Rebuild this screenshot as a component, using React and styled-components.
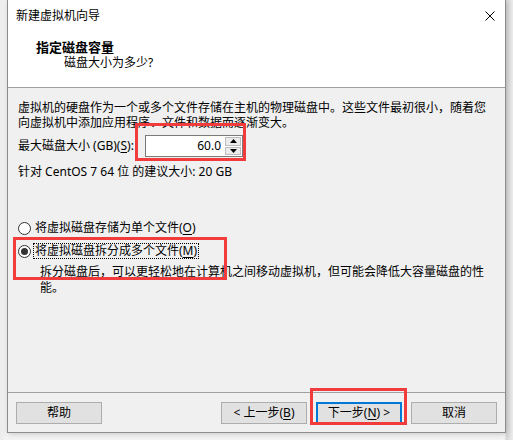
import React from "react"
import styled, { createGlobalStyle } from "styled-components"

const GlobalStyle = createGlobalStyle`
    html, body {
        margin: 0;
        padding: 0;
        background: #f2f2f2;
    }
    body {
        font-family: "Noto Sans", "Noto Sans CJK SC", sans-serif;
        font-size: 12px;
        color: #000;
    }
`

const Desktop = styled.div`
    position: relative;
    width: 513px;
    height: 440px;
    padding-left: 7px;
    box-sizing: border-box;
    overflow: hidden;
    background: linear-gradient(90deg, #ececec 0, #f4f4f4 7px, #f4f4f4 505px, #d6d6d6 506px, #ececec 513px);
`

const Window = styled.div`
    width: 499px;
    height: 433px;
    box-sizing: border-box;
    border: 1px solid #8c8c8c;
    border-top: none;
    background: #f0f0f0;
    display: flex;
    flex-direction: column;
    box-shadow: 1px 1px 6px rgba(0, 0, 0, 0.18);
`

const TitleBar = styled.div`
    height: 31px;
    background: #fff;
    display: flex;
    align-items: center;
    justify-content: space-between;
    padding: 0 10px 0 8px;
    line-height: 16px;
`

const CloseIcon = styled.svg`
    width: 10px;
    height: 10px;
`

const Header = styled.div`
    height: 57px;
    box-sizing: border-box;
    background: #fff;
    border-bottom: 1px solid #a0a0a0;
    padding: 8px 0 0 28px;
`

const HeaderTitle = styled.div`
    font-weight: bold;
    font-size: 13px;
    line-height: 16px;
`

const HeaderSub = styled.div`
    line-height: 16px;
    padding-left: 28px;
`

const Body = styled.div`
    flex: 1;
    padding: 12px 10px 0 10px;
`

const Paragraph = styled.p`
    margin: 0;
    width: 472px;
    line-height: 15px;
`

const SizeRow = styled.div`
    display: flex;
    align-items: center;
    height: 22px;
    margin-top: 5px;
`

const Label = styled.span`
    width: 127px;
    line-height: 16px;
`

const Key = styled.span`
    text-decoration: underline;
    text-underline-offset: 2px;
`

const SpinBox = styled.div`
    display: flex;
    height: 22px;
    box-sizing: border-box;
    border: 1px solid #7a7a7a;
    background: #fff;
`

const SpinValue = styled.div`
    width: 79px;
    text-align: right;
    padding-right: 4px;
    box-sizing: border-box;
    line-height: 20px;
`

const SpinButtons = styled.div`
    width: 16px;
    display: flex;
    flex-direction: column;
    gap: 1px;
    padding: 1px 1px 1px 0;
`

const SpinButton = styled.div`
    flex: 1;
    background: #ececec;
    border: 1px solid #bcbcbc;
    display: flex;
    align-items: center;
    justify-content: center;
`

const Hint = styled.div`
    margin-top: 7px;
    line-height: 16px;
`

const RadioGroup = styled.div`
    margin-top: 40px;
    display: flex;
    flex-direction: column;
    gap: 7px;
`

const RadioRow = styled.div`
    display: flex;
    align-items: center;
    height: 16px;
    gap: 2px;
`

const RadioCircle = styled.span`
    width: 13px;
    height: 13px;
    box-sizing: border-box;
    border: 1px solid #333;
    border-radius: 50%;
    background: #fff;
    display: flex;
    align-items: center;
    justify-content: center;
    &::after {
        content: "";
        width: 7px;
        height: 7px;
        border-radius: 50%;
        background: ${p => (p.$checked ? "#333" : "transparent")};
    }
`

const RadioLabel = styled.span`
    line-height: 14px;
    padding: 0 1px;
    border: 1px dotted ${p => (p.$focused ? "#000" : "transparent")};
`

const Description = styled.p`
    margin: 5px 0 0 22px;
    width: 450px;
    line-height: 16px;
`

const Footer = styled.div`
    height: 40px;
    box-sizing: border-box;
    border-top: 1px solid #a0a0a0;
    display: flex;
    align-items: flex-start;
    padding: 9px 7px 0 8px;
`

const Button = styled.div`
    width: 86px;
    height: 22px;
    box-sizing: border-box;
    background: #e1e1e1;
    border: 1px solid ${p => (p.$default ? "#0078d7" : "#adadad")};
    box-shadow: ${p => (p.$default ? "inset 0 0 0 1px #0078d7" : "none")};
    display: flex;
    align-items: center;
    justify-content: center;
    line-height: 16px;
    margin-left: ${p => p.$gap || 0}px;
`

const Mark = styled.div`
    position: absolute;
    box-sizing: border-box;
    border: 3px solid #f23b3d;
    pointer-events: none;
`

const Arrow = ({ up }) => (
    <svg width="7" height="4" viewBox="0 0 7 4">
        <path d={up ? "M0 4 L3.5 0 L7 4 Z" : "M0 0 L3.5 4 L7 0 Z"} fill="#000" />
    </svg>
)

export default function App() {
    return (
        <>
            <GlobalStyle />
            <Desktop>
                <Window>
                    <TitleBar>
                        <span>新建虚拟机向导</span>
                        <CloseIcon viewBox="0 0 10 10">
                            <path d="M0.5 0.5 L9.5 9.5 M9.5 0.5 L0.5 9.5" stroke="#000" strokeWidth="1" />
                        </CloseIcon>
                    </TitleBar>
                    <Header>
                        <HeaderTitle>指定磁盘容量</HeaderTitle>
                        <HeaderSub>磁盘大小为多少?</HeaderSub>
                    </Header>
                    <Body>
                        <Paragraph>
                            虚拟机的硬盘作为一个或多个文件存储在主机的物理磁盘中。这些文件最初很小，随着您向虚拟机中添加应用程序、文件和数据而逐渐变大。
                        </Paragraph>
                        <SizeRow>
                            <Label>最大磁盘大小 (GB)(<Key>S</Key>):</Label>
                            <SpinBox>
                                <SpinValue>60.0</SpinValue>
                                <SpinButtons>
                                    <SpinButton><Arrow up /></SpinButton>
                                    <SpinButton><Arrow /></SpinButton>
                                </SpinButtons>
                            </SpinBox>
                        </SizeRow>
                        <Hint>针对 CentOS 7 64 位 的建议大小: 20 GB</Hint>
                        <RadioGroup>
                            <RadioRow>
                                <RadioCircle />
                                <RadioLabel>将虚拟磁盘存储为单个文件(<Key>O</Key>)</RadioLabel>
                            </RadioRow>
                            <RadioRow>
                                <RadioCircle $checked />
                                <RadioLabel $focused>将虚拟磁盘拆分成多个文件(<Key>M</Key>)</RadioLabel>
                            </RadioRow>
                        </RadioGroup>
                        <Description>
                            拆分磁盘后，可以更轻松地在计算机之间移动虚拟机，但可能会降低大容量磁盘的性能。
                        </Description>
                    </Body>
                    <Footer>
                        <Button>帮助</Button>
                        <Button $gap={119}>&lt; 上一步(<Key>B</Key>)</Button>
                        <Button $gap={9} $default>下一步(<Key>N</Key>) &gt;</Button>
                        <Button $gap={9}>取消</Button>
                    </Footer>
                </Window>
                <Mark style={{ left: 135, top: 123, width: 111, height: 38 }} />
                <Mark style={{ left: 13, top: 237, width: 214, height: 43 }} />
                <Mark style={{ left: 310, top: 388, width: 97, height: 37 }} />
            </Desktop>
        </>
    )
}
